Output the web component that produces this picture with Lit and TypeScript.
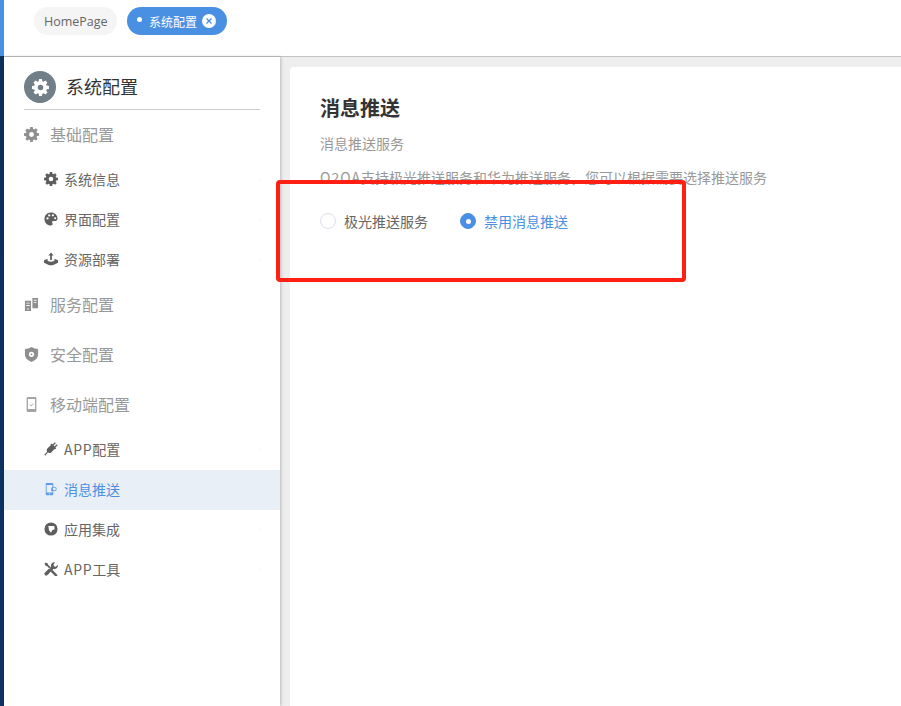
import { LitElement, html, css, svg } from "lit";
import { customElement } from "lit/decorators.js";

const gear = svg`<path fill-rule="evenodd" d="M6.700 0h2.600l.4 2.100c.4.100.8.3 1.100.5l1.800-1.200 1.900 1.900-1.200 1.800c.2.400.4.700.5 1.100L16 6.700v2.600l-2.100.4c-.1.400-.3.800-.5 1.100l1.200 1.800-1.900 1.900-1.800-1.200c-.4.200-.7.400-1.100.5L9.300 16H6.700l-.4-2.100c-.4-.1-.8-.3-1.100-.5l-1.800 1.200-1.900-1.900 1.200-1.800c-.2-.4-.4-.7-.5-1.100L0 9.300V6.700l2.100-.4c.1-.4.3-.8.5-1.100L1.400 3.400l1.900-1.900 1.800 1.200c.4-.2.7-.4 1.100-.5zM8 5.400a2.600 2.600 0 1 0 0 5.200 2.600 2.600 0 0 0 0-5.200z"/>`;
const palette = svg`<path fill-rule="evenodd" d="M8 .5C3.600.5.500 3.800.500 8c0 4.300 3.300 7.500 7.500 7.500 1.300 0 1.900-.8 1.900-1.700 0-1-.9-1.500-.7-2.500.2-.8.900-1.100 1.900-1.100h2c1.400 0 2.400-1 2.400-2.400C15.500 3.500 12.200.5 8 .5zM4 8.700a1.300 1.300 0 1 1 0-2.600 1.300 1.300 0 0 1 0 2.600zm2-3.500a1.300 1.300 0 1 1 0-2.600 1.300 1.300 0 0 1 0 2.600zm4.200-.1a1.300 1.300 0 1 1 0-2.600 1.300 1.300 0 0 1 0 2.600zm2.600 3.200a1.200 1.200 0 1 1 0-2.400 1.200 1.200 0 0 1 0 2.400z"/>`;
const deploy = svg`<path d="M8 .5 11 4H9v5H7V4H5zM0 9.500l4-1.800v1.800c0 1 1.500 1.500 4 1.500s4-.5 4-1.500V7.700l4 1.800v2.800L10 15H6l-6-2.700z"/>`;
const server = svg`<path fill-rule="evenodd" d="M1 4h6.500v11H1zm1.500 2v1H6V6zm0 2.500v1H6v-1zM4.200 12a.8.800 0 1 0 0 1.600.8.800 0 0 0 0-1.600zM9 1h6v11H9zm1.500 2v1H13.500V3zm0 2.500v1H13.500v-1z"/>`;
const shield = svg`<path fill-rule="evenodd" d="M8 0c2.200 1.400 4.500 2 7 2.200V8c0 3.500-2.800 6.300-7 8-4.200-1.700-7-4.500-7-8V2.200C3.500 2 5.800 1.400 8 0zm0 5a2.800 2.800 0 1 0 0 5.600A2.800 2.800 0 0 0 8 5zm0 1.800a1 1 0 1 1 0 2 1 1 0 0 1 0-2z"/>`;
const phone = svg`<path fill-rule="evenodd" d="M4 0h8A1.200 1.200 0 0 1 13.200 1.200v13.600A1.200 1.200 0 0 1 12 16H4a1.200 1.200 0 0 1-1.200-1.200V1.200A1.200 1.200 0 0 1 4 0zm.2 2v10.800h7.600V2zm2 5.800 1.300 1.300 2.300-2.500.5.500-2.800 3.100-1.800-1.900z"/>`;
const plug = svg`<path d="M12.400.4 13.500 1.500 10.900 4.100 11.900 5.100 14.500 2.500 15.600 3.600 13 6.200 14 7.200 12.800 8.400 12 8.100 8.500 11.600C7.300 12.700 5.700 12.900 4.400 12L1.400 15.600.4 14.700 3.500 11C2.800 9.800 3 8.300 4.100 7.200L7.700 3.700 7.500 2.900 8.700 1.700 9.800 2.900z"/>`;
const msg = svg`<path fill-rule="evenodd" d="M3 1h6.500A1 1 0 0 1 10.500 2v3H9.500V3.500H3V12H9.500v-1h1v3a1 1 0 0 1-1 1H3a1 1 0 0 1-1-1V2a1 1 0 0 1 1-1zM6.200 12.800a.7.7 0 1 0 0 1.400.7.700 0 0 0 0-1.400zM11.800 5.300a2.700 2.700 0 0 1 0 5.400H8.200V8a2.700 2.700 0 0 1 3.600-2.700zm0 1a1.700 1.700 0 1 0 0 3.400 1.700 1.700 0 0 0 0-3.400z"/>`;
const appInt = svg`<path fill-rule="evenodd" d="M8 .5a7.500 7.500 0 1 1 0 15A7.500 7.500 0 0 1 8 .5zM5 4.500l.7 5 2.400 2.800 1.200-3 2.900-1-.4-3.800z"/>`;
const tools = svg`<path d="M.6 1.900 1.900.6l2.400 1.100.4 1.500 3.200 3.200-1.400 1.400-3.200-3.200-1.500-.4zM12.700.3a3.700 3.700 0 0 0-4.500 4.700L.9 12.300a2 2 0 0 0 2.800 2.800l7.300-7.300a3.700 3.700 0 0 0 4.700-4.500l-2.300 2.200-2-.6-.6-2zM9.800 9.200l5 5a1.400 1.400 0 0 1-2 2l-5-5z"/>`;

const ic = (p: unknown, cls = "") => html`<svg class="ic ${cls}" viewBox="0 0 16 16" aria-hidden="true">${p}</svg>`;

@customElement("app-root")
export class AppRoot extends LitElement {
  static styles = css`
    :host {
      display: block;
      width: 901px;
      height: 706px;
      overflow: hidden;
      position: relative;
      font-family: "Noto Sans CJK SC", "Open Sans", sans-serif;
      color: #666;
    }
    .frame { display: flex; height: 706px; }
    .strip { width: 4px; flex: none; display: flex; flex-direction: column; }
    .strip-top { height: 56px; background: #4a90e2; }
    .strip-bot { flex: 1; background: linear-gradient(#0c2f5e, #0d3264); }
    .main { flex: 1; min-width: 0; display: flex; flex-direction: column; }
    .tabs {
      height: 57px; flex: none; box-sizing: border-box;
      border-bottom: 1px solid #c4c4c4;
      background: #fff;
      display: flex; align-items: flex-start; gap: 10px;
      padding: 7px 0 0 30px;
    }
    .tab {
      height: 28px; border-radius: 14px; box-sizing: border-box;
      display: flex; align-items: center;
    }
    .tab.home { background: #f5f5f5; color: #666; padding: 0 0 0 10px; width: 83px; font-family: "Open Sans", sans-serif; font-size: 12.5px; }
    .tab.cur { background: #4a90e2; color: #fff; width: 100px; padding: 0 0 0 10px; font-size: 12px; }
    .dot { width: 5px; height: 5px; border-radius: 50%; background: #fff; margin: -3px 7px 0 0; flex: none; }
    .close { width: 14px; height: 14px; margin-left: 5px; flex: none; }
    .body { flex: 1; display: flex; min-height: 0; }
    .side {
      width: 276px; flex: none; background: #fff; box-sizing: border-box;
      box-shadow: 1px 0 3px rgba(0,0,0,.22);
      position: relative;
      padding-top: 14px;
    }
    .side-head {
      margin: 0 20px; height: 38px; border-bottom: 1px solid #ccc;
      display: flex; align-items: flex-start; gap: 10px;
    }
    .badge { width: 32px; height: 32px; border-radius: 50%; background: #718088; display: flex; align-items: center; justify-content: center; flex: none; }
    .badge svg { width: 17px; height: 17px; fill: #fff; }
    .side-title { font-size: 18px; line-height: 30px; color: #333; }
    .group { height: 50px; box-sizing: border-box; padding: 0 0 2px 20px; display: flex; align-items: center; font-size: 16px; color: #999; gap: 11px; }
    .group .ic { width: 15px; height: 15px; fill: #8f8f8f; flex: none; }
    .group .ic.narrow { fill: #a3a3a3; margin-top: 1px; }
    .item { height: 40px; box-sizing: border-box; padding: 0 0 2px 40px; display: flex; align-items: center; font-size: 14px; color: #666; gap: 6px; }
    .item .ic { width: 14px; height: 14px; fill: #5e5e5e; flex: none; }
    .item.on { background: #e9eff7; color: #4a90e2; }
    .item.on .ic { fill: #5f9be6; }
    .tick { width: 1px; height: 1px; background: #e4e4e4; margin-left: auto; margin-right: 20px; }
    .latin { letter-spacing: .7px; }
    .latin-wide { letter-spacing: 1px; }
    .content { flex: 1; min-width: 0; background: #eee; padding: 10px 0 0 10px; }
    .card { height: 100%; background: #fff; border-radius: 4px 0 0 0; padding: 27px 30px 0; box-sizing: border-box; }
    h1 { margin: 0; font-size: 20px; font-weight: 700; color: #333; line-height: 28px; }
    .sub { font-size: 14px; color: #999; margin-top: 11px; line-height: 20px; }
    .desc { font-size: 14px; color: #999; margin-top: 14px; line-height: 20px; white-space: nowrap; }
    .radios { display: flex; align-items: center; margin-top: 24px; font-size: 14px; height: 20px; }
    .radio { width: 16px; height: 16px; box-sizing: border-box; border-radius: 50%; border: 1px solid #dcdfe6; background: #fff; margin-right: 8px; flex: none; display: flex; align-items: center; justify-content: center; }
    .radio.on { background: #4a90e2; border-color: #4a90e2; }
    .radio.on::after { content: ""; width: 5px; height: 5px; border-radius: 50%; background: #fff; }
    .opt { color: #666; margin-right: 32px; }
    .opt.on { color: #4a90e2; margin-right: 0; }
    .mark {
      position: absolute; left: 276px; top: 180px; width: 410px; height: 102px;
      box-sizing: border-box; border: 4px solid #ff1f13; border-radius: 4px; pointer-events: none;
    }
  `;

  private item(icon: unknown, label: unknown, on = false) {
    return html`<div class="item ${on ? "on" : ""}">${ic(icon)}<span>${label}</span><span class="tick"></span></div>`;
  }

  render() {
    return html`
      <div class="frame">
        <div class="strip"><div class="strip-top"></div><div class="strip-bot"></div></div>
        <div class="main">
          <div class="tabs">
            <div class="tab home">HomePage</div>
            <div class="tab cur">
              <span class="dot"></span><span>系统配置</span>
              <svg class="close" viewBox="0 0 14 14" aria-hidden="true"><circle cx="7" cy="7" r="7" fill="#fff"/><path d="M4.500 4.500l5 5M9.500 4.500l-5 5" stroke="#4a90e2" stroke-width="1.300" fill="none"/></svg>
            </div>
          </div>
          <div class="body">
            <aside class="side">
              <div class="side-head">
                <div class="badge"><svg viewBox="0 0 16 16" aria-hidden="true">${gear}</svg></div>
                <div class="side-title">系统配置</div>
              </div>
              <div class="group">${ic(gear)}基础配置</div>
              ${this.item(gear, "系统信息")}
              ${this.item(palette, "界面配置")}
              ${this.item(deploy, "资源部署")}
              <div class="group">${ic(server)}服务配置</div>
              <div class="group">${ic(shield)}安全配置</div>
              <div class="group">${ic(phone, "narrow")}移动端配置</div>
              ${this.item(plug, html`<span class="latin">APP</span>配置`)}
              ${this.item(msg, "消息推送", true)}
              ${this.item(appInt, "应用集成")}
              ${this.item(tools, html`<span class="latin">APP</span>工具`)}
            </aside>
            <section class="content">
              <div class="card">
                <h1>消息推送</h1>
                <div class="sub">消息推送服务</div>
                <div class="desc"><span class="latin-wide">O2OA</span>支持极光推送服务和华为推送服务，您可以根据需要选择推送服务</div>
                <div class="radios">
                  <span class="radio"></span><span class="opt">极光推送服务</span>
                  <span class="radio on"></span><span class="opt on">禁用消息推送</span>
                </div>
              </div>
            </section>
          </div>
        </div>
      </div>
      <div class="mark"></div>
    `;
  }
}
